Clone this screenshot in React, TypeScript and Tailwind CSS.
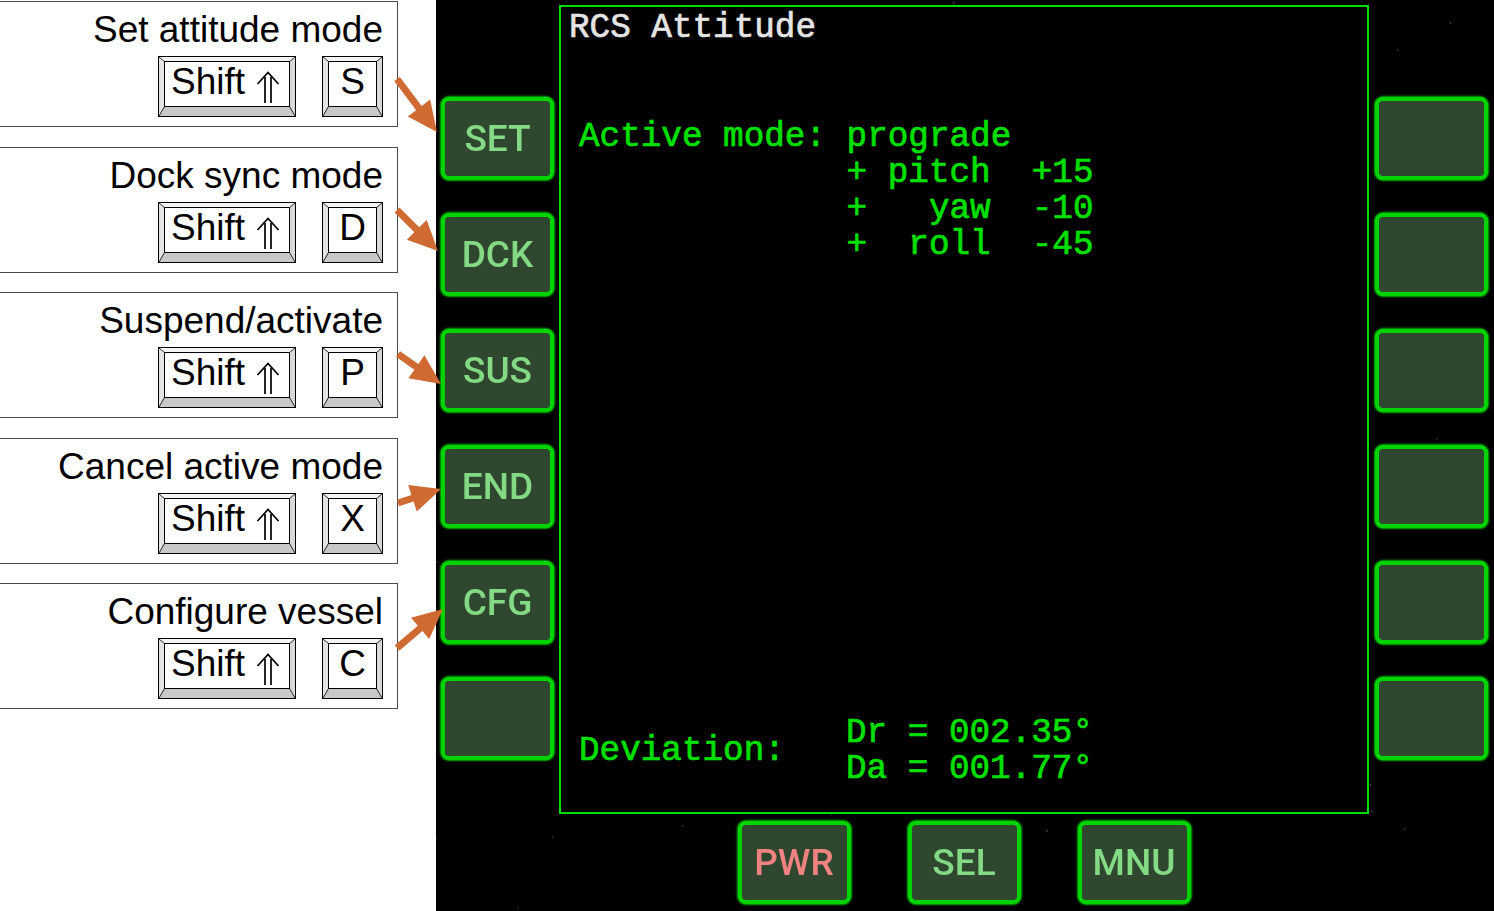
import React from 'react';

const shortcuts = [
  { title: 'Set attitude mode', key: 'S' },
  { title: 'Dock sync mode', key: 'D' },
  { title: 'Suspend/activate', key: 'P' },
  { title: 'Cancel active mode', key: 'X' },
  { title: 'Configure vessel', key: 'C' },
];

const leftButtons = ['SET', 'DCK', 'SUS', 'END', 'CFG', ''];
const rightButtons = ['', '', '', '', '', ''];

// tail -> tip, page coordinates
const arrows = [
  [397, 79, 437, 132],
  [397, 210, 438, 251],
  [398, 354, 441, 384],
  [398, 503, 441, 489],
  [397, 648, 443, 609],
];

// pseudo random starfield
const stars: { x: number; y: number; o: number }[] = [];
let seed = 7;
const rnd = () => {
  seed = (seed * 16807) % 2147483647;
  return seed / 2147483647;
};
for (let i = 0; i < 70; i++) {
  stars.push({ x: rnd() * 1058, y: rnd() * 911, o: 0.25 + rnd() * 0.35 });
}

const arrowPoints = (tx: number, ty: number, px: number, py: number) => {
  const len = Math.hypot(px - tx, py - ty);
  const dx = (px - tx) / len;
  const dy = (py - ty) / len;
  const nx = -dy;
  const ny = dx;
  const hl = 30;
  const hw = 14;
  const sw = 3.5;
  const bx = px - dx * hl;
  const by = py - dy * hl;
  const pts = [
    [tx + nx * sw, ty + ny * sw],
    [bx + nx * sw, by + ny * sw],
    [bx + nx * hw, by + ny * hw],
    [px, py],
    [bx - nx * hw, by - ny * hw],
    [bx - nx * sw, by - ny * sw],
    [tx - nx * sw, ty - ny * sw],
  ];
  return pts.map((p) => p.join(',')).join(' ');
};

const Keycap = ({ w, children }: { w: number; children: React.ReactNode }) => (
  <div className="relative h-[61px]" style={{ width: w }}>
    <svg className="absolute inset-0" width={w} height={61} viewBox={`0 0 ${w} 61`}>
      <rect x={0.5} y={0.5} width={w - 1} height={60} fill="#d0d0d0" stroke="#000" />
      <polygon points={`1,1 ${w - 1},1 ${w - 6},5 6,5`} fill="#f4f4f4" />
      <polygon points={`1,1 6,5 6,50 1,60`} fill="#e4e4e4" />
      <polygon points={`${w - 1},1 ${w - 6},5 ${w - 6},50 ${w - 1},60`} fill="#d8d8d8" />
      <polygon points={`1,60 6,50 ${w - 6},50 ${w - 1},60`} fill="#c8c8c8" />
      <rect x={6.5} y={5.5} width={w - 13} height={45} fill="#fff" stroke="#000" />
      <g stroke="#000" strokeWidth={0.8}>
        <line x1={1} y1={1} x2={6.5} y2={5.5} />
        <line x1={w - 1} y1={1} x2={w - 6.5} y2={5.5} />
        <line x1={1} y1={60} x2={6.5} y2={50.5} />
        <line x1={w - 1} y1={60} x2={w - 6.5} y2={50.5} />
      </g>
    </svg>
    <div className="relative flex h-full items-start pt-[7px] text-[37px] leading-[37px] text-black [font-family:'Liberation_Sans',Arial,sans-serif]">
      {children}
    </div>
  </div>
);

const ShiftArrow = () => (
  <svg width="24" height="32" viewBox="0 0 24 32" className="ml-[11px] mt-[8px]">
    <g fill="none" stroke="#000" strokeWidth="1.7" strokeLinejoin="miter">
      <path d="M1.5 13 L12 1.5 L22.5 13" />
      <path d="M9 6 V32" />
      <path d="M15 6 V32" />
    </g>
  </svg>
);

const MfdButton = ({ label, red }: { label: string; red?: boolean }) => (
  <div className="flex h-[83px] w-[113px] items-center justify-center rounded-[8px] border-[4px] border-[#00d400] bg-[#2e472e] shadow-[0_0_2px_1px_#00b000]">
    <span
      className={`text-[37px] font-medium leading-none blur-[0.6px] [font-family:Roboto,'Liberation_Sans',sans-serif] ${
        red ? 'text-[#f08282]' : 'text-[#84d984]'
      }`}
    >
      {label}
    </span>
  </div>
);

export default function App() {
  return (
    <div className="relative flex h-[911px] w-[1494px] overflow-hidden">
      {/* shortcut legend */}
      <div className="flex w-[436px] flex-col gap-[19.5px] bg-white pt-[1px]">
        {shortcuts.map((s) => (
          <div
            key={s.key}
            className="flex h-[126px] w-[398px] flex-col items-end border border-l-0 border-[#4a4a4a] pr-[14px] pt-[10px]"
          >
            <div className="text-[37px] leading-[36px] text-black [font-family:'Liberation_Sans',Arial,sans-serif]">
              {s.title}
            </div>
            <div className="mt-[8px] flex gap-[26px]">
              <Keycap w={138}>
                <span className="pl-[13px]">Shift</span>
                <ShiftArrow />
              </Keycap>
              <Keycap w={61}>
                <span className="w-full text-center">{s.key}</span>
              </Keycap>
            </div>
          </div>
        ))}
      </div>

      {/* MFD */}
      <div className="relative flex-1 bg-black">
        <svg className="absolute inset-0" width="1058" height="911">
          {stars.map((s, i) => (
            <circle key={i} cx={s.x} cy={s.y} r={0.9} fill="#8a8a8a" opacity={s.o} />
          ))}
        </svg>

        <div className="relative flex pt-[5px]">
          <div className="ml-[5px] flex w-[113px] flex-col gap-[33px] pt-[92px]">
            {leftButtons.map((b, i) => (
              <MfdButton key={i} label={b} />
            ))}
          </div>

          <div className="ml-[5px] flex h-[809px] w-[810px] flex-col border-2 border-[#00e000] bg-black [font-family:'Liberation_Mono','Courier_New',monospace] text-[34.3px] leading-[36px] [-webkit-text-stroke:0.7px_currentColor]">
            <div className="pl-[8px] pt-[3px] text-[#e4e4e4]">RCS Attitude</div>
            <div className="ml-[18px] mt-[73px] whitespace-pre text-[#00e000]">
              <div>Active mode: prograde</div>
              <div>{'             + pitch  +15'}</div>
              <div>{'             +   yaw  -10'}</div>
              <div>{'             +  roll  -45'}</div>
            </div>
            <div className="mb-[25px] ml-[18px] mt-auto flex items-center whitespace-pre text-[#00e000]">
              <div className="w-[267px]">Deviation:</div>
              <div>
                <div>Dr = 002.35°</div>
                <div>Da = 001.77°</div>
              </div>
            </div>
          </div>

          <div className="ml-[6px] flex w-[113px] flex-col gap-[33px] pt-[92px]">
            {rightButtons.map((b, i) => (
              <MfdButton key={i} label={b} />
            ))}
          </div>
        </div>

        <div className="relative ml-[123px] mt-[7px] flex w-[810px] justify-center gap-[57px]">
          <MfdButton label="PWR" red />
          <MfdButton label="SEL" />
          <MfdButton label="MNU" />
        </div>
      </div>

      {/* callout arrows */}
      <svg className="pointer-events-none absolute inset-0" width="1494" height="911">
        {arrows.map((a, i) => (
          <polygon key={i} points={arrowPoints(a[0], a[1], a[2], a[3])} fill="#cf6a32" />
        ))}
      </svg>
    </div>
  );
}
